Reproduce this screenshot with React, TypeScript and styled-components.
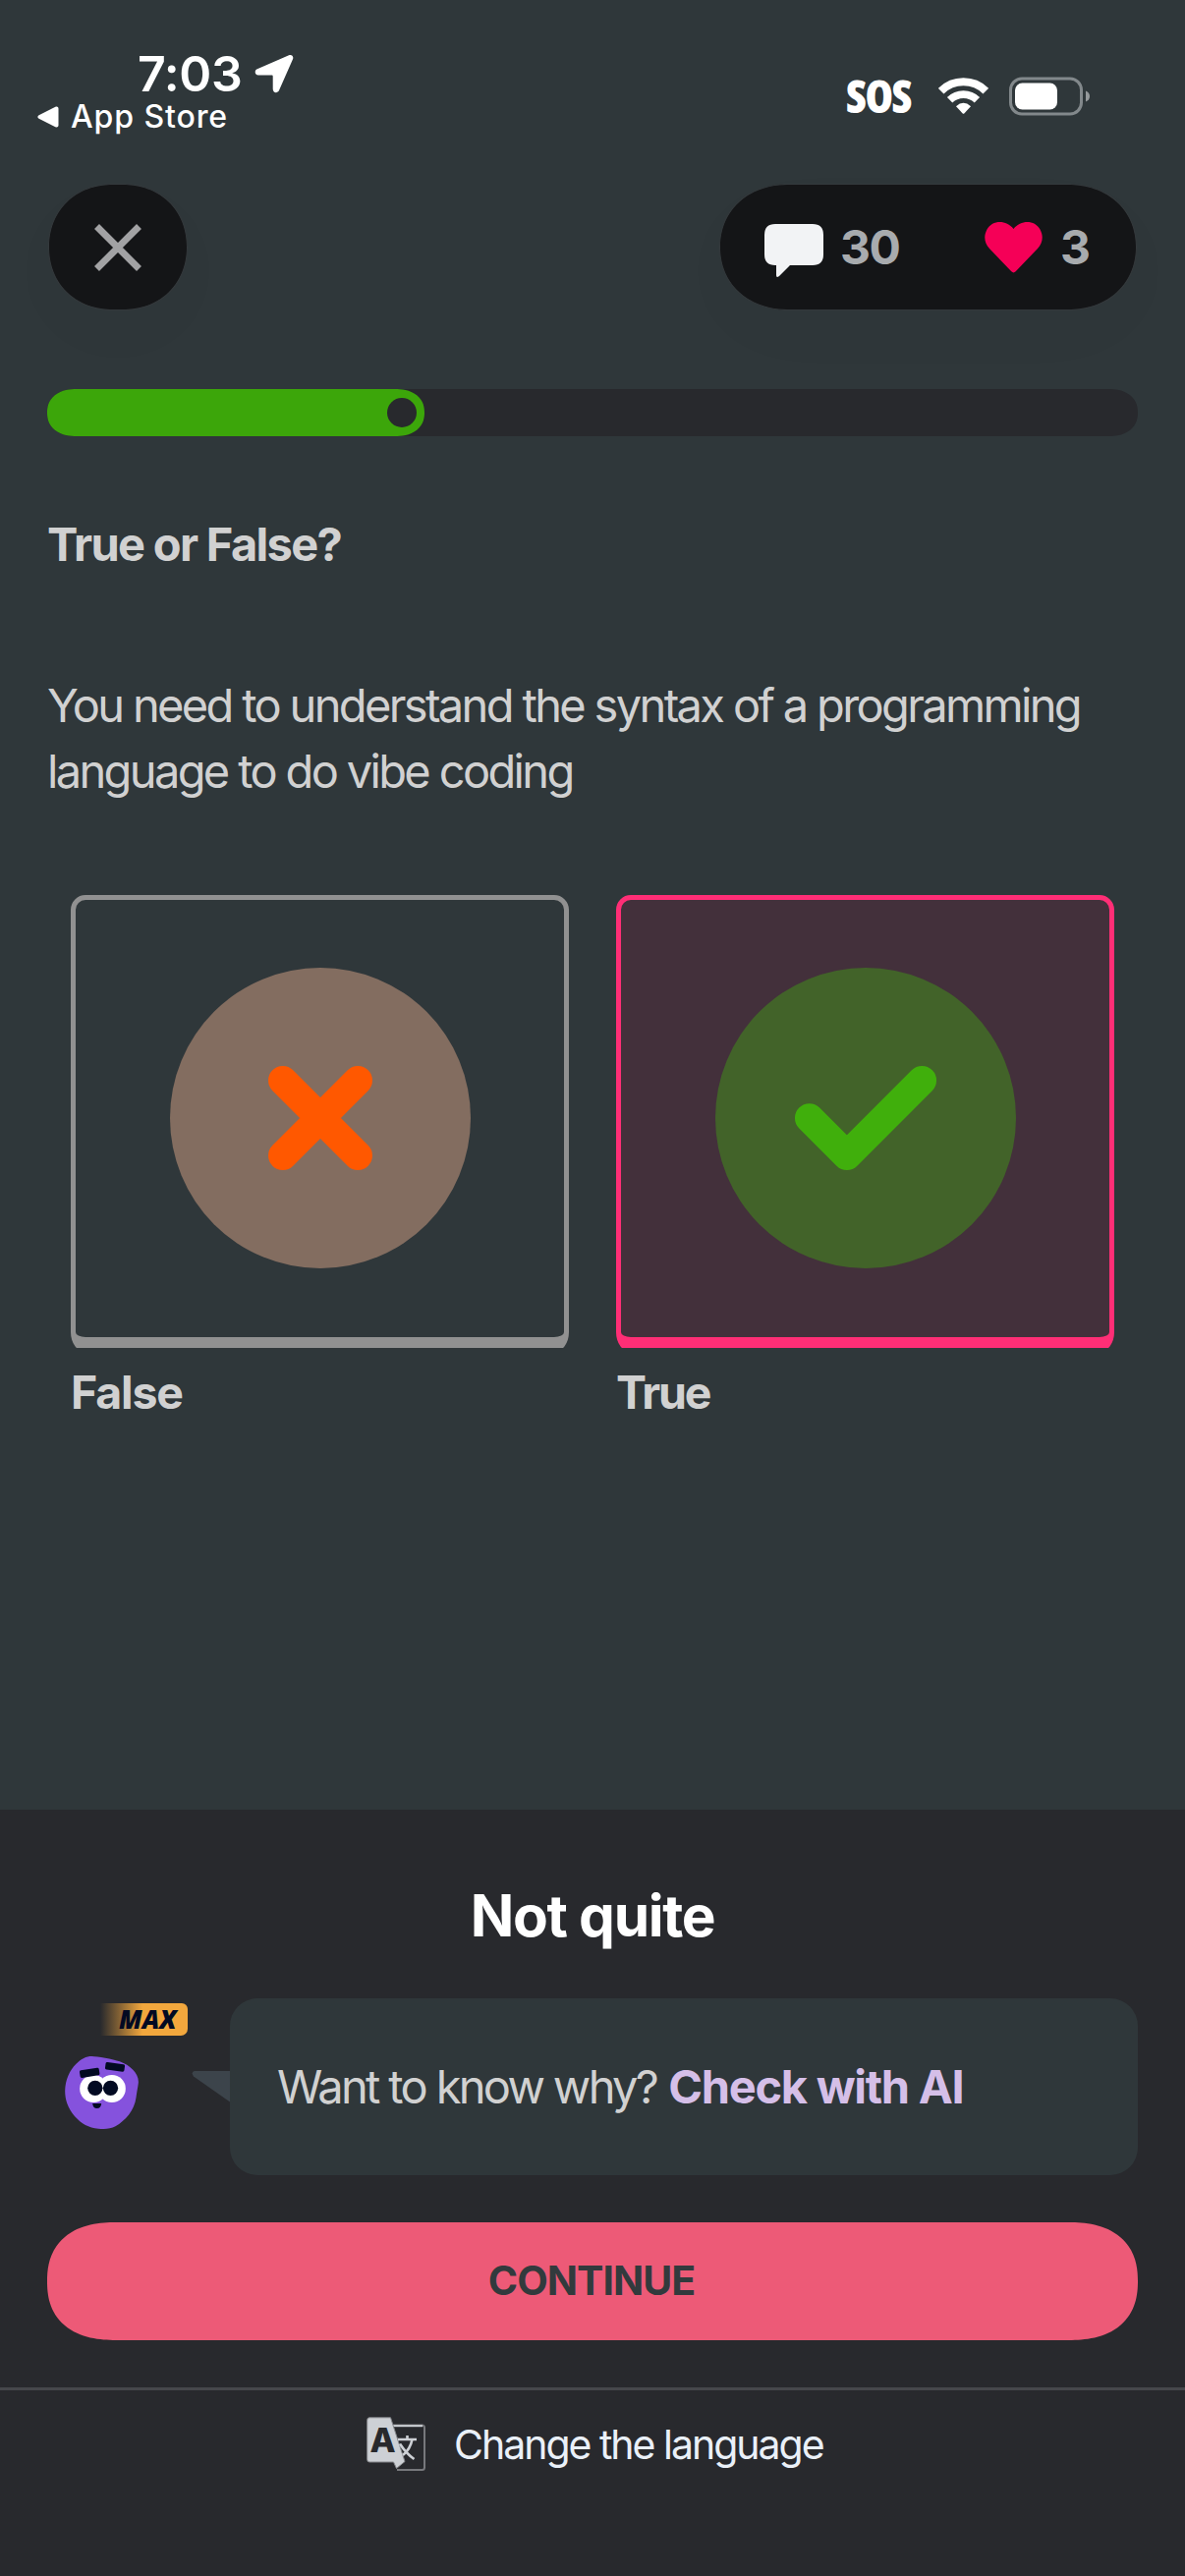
import React from "react";
import styled, { createGlobalStyle } from "styled-components";

const colors = {
  page: "#2f373a",
  panel: "#28292d",
  capsule: "#141517",
  text: "#d1d1d1",
  green: "#3ca60a",
  pink: "#ff2e76",
};

const GlobalStyle = createGlobalStyle`
  * { box-sizing: border-box; }
  body {
    margin: 0;
    background: ${colors.page};
    font-family: Inter, "Liberation Sans", sans-serif;
    -webkit-font-smoothing: antialiased;
  }
  svg { display: block; flex: none; }
`;

const Screen = styled.div`
  width: 1206px;
  height: 2622px;
  display: flex;
  flex-direction: column;
  overflow: hidden;
  background: ${colors.page};
`;

/* ---------- Status bar ---------- */

const StatusBar = styled.div`
  height: 187px;
  flex: none;
  display: flex;
  justify-content: space-between;
  padding: 50px 96px 0 38px;
  color: #fff;
`;

const StatusLeft = styled.div`
  display: flex;
  flex-direction: column;
  gap: 3px;
`;

const TimeRow = styled.div`
  display: flex;
  align-items: center;
  gap: 13px;
  height: 50px;
  padding-left: 102px;
`;

const Time = styled.span`
  font-size: 50px;
  line-height: 50px;
  font-weight: 600;
  letter-spacing: -0.35px;
`;

const BackRow = styled.div`
  display: flex;
  align-items: center;
  gap: 12px;
  height: 32px;
  font-size: 32px;
  line-height: 32px;
  font-weight: 500;
  letter-spacing: 0.9px;
`;

const StatusRight = styled.div`
  display: flex;
  align-items: center;
  height: 96px;
`;

const Sos = styled.span`
  font-family: "Open Sans", sans-serif;
  font-stretch: 75%;
  font-weight: 800;
  font-size: 46px;
  line-height: 46px;
  letter-spacing: -1.5px;
  width: 68px;
  margin-right: 26px;
  padding-bottom: 2px;
`;

const WifiIcon = styled.svg`
  margin-right: 21px;
`;

/* ---------- Header ---------- */

const Header = styled.header`
  display: flex;
  justify-content: space-between;
  flex: none;
  padding: 0 49px;
`;

const Capsule = styled.div<{ $width: number; $radius: string }>`
  width: ${(p) => p.$width}px;
  height: 129px;
  display: flex;
  align-items: center;
  background: ${colors.capsule};
  border: 1.5px solid #34393c;
  border-radius: ${(p) => p.$radius};
  corner-shape: superellipse(1.08);
  box-shadow: 0 24px 72px rgba(0, 0, 0, 0.02);
`;

const CloseButton = styled(Capsule)`
  justify-content: center;
`;

const Counters = styled(Capsule)`
  padding-left: 45px;
`;

const CommentIcon = styled.svg`
  margin-top: 7px;
`;

const Count = styled.span`
  font-size: 48px;
  line-height: 60px;
  font-weight: 700;
  letter-spacing: -1.5px;
  color: #a8abae;
`;

const Bits = styled(Count)`
  width: 147px;
  margin-left: 17px;
`;

const Hearts = styled(Count)`
  margin-left: 17px;
`;

/* ---------- Progress ---------- */

const Track = styled.div`
  flex: none;
  height: 48px;
  margin: 80px 48px 0;
  background: ${colors.panel};
  border-radius: 30px / 24px;
  corner-shape: superellipse(1.2);
`;

const Fill = styled.div`
  width: 384px;
  height: 48px;
  display: flex;
  align-items: center;
  justify-content: flex-end;
  padding-right: 8px;
  background: ${colors.green};
  border-radius: 30px / 24px;
  corner-shape: superellipse(1.2);
`;

const Knob = styled.div`
  width: 30px;
  height: 30px;
  border-radius: 50%;
  background: ${colors.panel};
`;

/* ---------- Question ---------- */

const Heading = styled.h1`
  margin: 80px 48px 0;
  font-size: 47px;
  line-height: 60px;
  font-weight: 700;
  letter-spacing: -1.69px;
  color: ${colors.text};
`;

const Statement = styled.p`
  width: 1110px;
  margin: 100px 48px 0;
  font-size: 47px;
  line-height: 67px;
  letter-spacing: -2.65px;
  color: ${colors.text};
`;

const Options = styled.div`
  display: grid;
  grid-template-columns: 1fr 1fr;
  gap: 48px;
  padding: 0 72px;
  margin-top: 93px;
`;

const Option = styled.div`
  display: flex;
  flex-direction: column;
`;

/* Crops the lower edge of the card so its bottom corners end flat. */
const OptionClip = styled.div`
  height: 461px;
  overflow: hidden;
`;

const OptionCard = styled.div<{ $selected?: boolean }>`
  height: 465px;
  display: flex;
  justify-content: center;
  padding-top: 69px;
  border: 5px solid ${(p) => (p.$selected ? colors.pink : "#919191")};
  border-bottom-width: 15px;
  border-radius: 15px / 15px 15px 20px 20px;
  background: ${(p) => (p.$selected ? "#43303b" : "transparent")};
`;

const OptionLabel = styled.div<{ $tracking: number }>`
  margin-top: 15px;
  font-size: 46.5px;
  line-height: 60px;
  font-weight: 700;
  letter-spacing: ${(p) => p.$tracking}px;
  color: ${colors.text};
`;

/* ---------- Result panel ---------- */

const Panel = styled.section`
  height: 780px;
  margin-top: auto;
  flex: none;
  padding-top: 72px;
  background: ${colors.panel};
`;

const Verdict = styled.h2`
  margin: 0;
  text-align: center;
  font-size: 58.5px;
  line-height: 72px;
  font-weight: 700;
  letter-spacing: -1.32px;
  color: #fff;
`;

const HintRow = styled.div`
  display: flex;
  margin: 48px 48px 0;
`;

const MascotColumn = styled.div`
  width: 186px;
  flex: none;
  padding-top: 5px;
`;

const MaxBadge = styled.div`
  width: 89px;
  height: 33px;
  margin: 0 0 21px 54px;
  padding-left: 19px;
  border-radius: 0 6px 7px 0;
  background: linear-gradient(90deg, rgba(242, 167, 61, 0) 0, #f2a73d 43px);
  font-family: "Open Sans", sans-serif;
  font-style: italic;
  font-weight: 800;
  font-size: 26px;
  line-height: 33px;
  color: #020a22;
`;

const Mascot = styled.svg`
  margin-left: 18px;
`;

const Hint = styled.div`
  position: relative;
  flex: 1;
  height: 180px;
  display: flex;
  align-items: center;
  padding-left: 48px;
  border-radius: 28px;
  background: ${colors.page};
  font-size: 47px;
  line-height: 60px;
  white-space: pre;
`;

const HintTail = styled.svg`
  position: absolute;
  left: -39px;
  top: 74px;
`;

const HintQuestion = styled.span`
  font-weight: 400;
  letter-spacing: -2.67px;
  color: ${colors.text};
`;

const HintLink = styled.span`
  margin-left: 12px;
  font-weight: 700;
  letter-spacing: -1.27px;
  color: #d5bfe8;
`;

const ContinueButton = styled.button`
  display: block;
  width: 1110px;
  height: 120px;
  margin: 48px 48px 0;
  padding: 0 2px 2px 0;
  border: 0;
  border-radius: 70px / 60px;
  corner-shape: superellipse(1.25);
  background: #ed5a77;
  font-family: inherit;
  font-size: 41px;
  font-weight: 650;
  letter-spacing: -0.98px;
  color: #323a3d;
`;

const LanguageRow = styled.div`
  display: flex;
  align-items: center;
  gap: 29px;
  margin-top: 48px;
  padding: 27px 0 0 373px;
  border-top: 3px solid #46474b;
  font-size: 41px;
  line-height: 54px;
  letter-spacing: -2.01px;
  color: #eaf0f8;
`;

const TranslateIcon = () => (
  <svg width="60" height="56" viewBox="0 0 60 56">
    <path d="M27 8.500H56.500Q59 8.500 59 11V51.500Q59 54 56.500 54H31" fill="none" stroke="#77787c" strokeWidth="2" />
    <path d="M27 9.200H57" stroke="#cdd0d5" strokeWidth="2" />
    <path d="M3 .8H24.500L39 45.500L30.500 52.500L27.500 46H3Q.7 46 .7 43.500V3.500Q.7.8 3 .8Z" fill="#cdd0d5" stroke="#85878b" strokeWidth="1" />
    <text x="16.500" y="35.500" textAnchor="middle" fontFamily="Inter, sans-serif" fontSize="34" fontWeight="800" letterSpacing="0" fill="#28292d">A</text>
    <g fill="none" stroke="#cdd0d5" strokeWidth="2.600">
      <path d="M32 23H51M41.500 19V23M34 27.500Q40 37 48.500 43M46.500 23Q44.500 33 37 39" />
    </g>
  </svg>
);

export default function App() {
  return (
    <>
      <GlobalStyle />
      <Screen>
        <StatusBar>
          <StatusLeft>
            <TimeRow>
              <Time>7:03</Time>
              <svg width="40" height="40" viewBox="0 0 40 40">
                <path d="M35 1.200 2.800 15.200C-.5 16.700.2 21.500 4 21.500H17.500C18.300 21.500 18.700 21.900 18.700 22.700V35.500C18.700 39.800 23.500 40.300 25 37L39 5.200C40.200 2.400 37.800 0 35 1.200Z" fill="#fff" />
              </svg>
            </TimeRow>
            <BackRow>
              <svg width="22" height="22" viewBox="0 0 22 22">
                <path d="M1.600 9.200 18.400.8C20 0 21.500.8 21.500 2.500V19.500C21.500 21.200 20 22 18.400 21.200L1.600 12.800C0 12 0 10 1.600 9.200Z" fill="#fff" />
              </svg>
              App Store
            </BackRow>
          </StatusLeft>
          <StatusRight>
            <Sos>SOS</Sos>
            <WifiIcon width="51" height="38" viewBox="0 0 51 38">
              <g fill="none" stroke="#fff" strokeWidth="8">
                <path d="M2.700 13.700A32.500 32.500 0 0 1 48.300 13.700" />
                <path d="M11.600 22.800A19.800 19.800 0 0 1 39.400 22.800" strokeWidth="7.600" />
              </g>
              <path d="M18 29.200Q25.500 22.500 33 29.200L26.500 36.300Q25.500 37.300 24.500 36.300Z" fill="#fff" />
            </WifiIcon>
            <svg width="83" height="40" viewBox="0 0 83 40">
              <rect x="1.500" y="2" width="72" height="36" rx="11.500" fill="none" stroke="#82888b" strokeWidth="3" />
              <rect x="6" y="6.500" width="43" height="27" rx="7.500" fill="#fff" />
              <path d="M78 14.500Q82 16 82 20T78 25.500Z" fill="#95999b" />
            </svg>
          </StatusRight>
        </StatusBar>

        <Header>
          <CloseButton $width={142} $radius="66px / 64.5px">
            <svg width="48" height="48" viewBox="0 0 48 48">
              <path d="M2.500 2.500 45.500 45.500M45.500 2.500 2.500 45.500" stroke="#a2a2a4" strokeWidth="7" />
            </svg>
          </CloseButton>
          <Counters $width={425} $radius="70px / 64.5px">
            <CommentIcon width="60" height="56" viewBox="0 0 60 56">
              <path d="M11 1H49Q60 1 60 12V32Q60 43 49 43H26L15 54Q12 56.500 12 53V43H11Q0 43 0 32V12Q0 1 11 1Z" fill="#f2f3f5" />
            </CommentIcon>
            <Bits>30</Bits>
            <svg width="60" height="52" viewBox="0 0 60 52">
              <path d="M29.500 7C22-2.500 8-2.300 2.500 7.500C-1.500 15 .2 22 5 27L27.300 50.300Q29.500 52.500 31.700 50.300L54 27C58.800 22 60.500 15 56.500 7.500C51-2.300 37-2.500 29.500 7Z" fill="#f50057" />
            </svg>
            <Hearts>3</Hearts>
          </Counters>
        </Header>

        <Track>
          <Fill>
            <Knob />
          </Fill>
        </Track>

        <Heading>True or False?</Heading>
        <Statement>
          You need to understand the syntax of a programming
          <br />
          language to do vibe coding
        </Statement>

        <Options>
          <Option>
            <OptionClip>
              <OptionCard>
                <svg width="306" height="306" viewBox="-153 -153 306 306">
                  <circle r="153" fill="#836d60" />
                  <path d="M-38.200-38.200 38.200 38.200M38.200-38.200-38.200 38.200" stroke="#ff5800" strokeWidth="29.500" strokeLinecap="round" />
                </svg>
              </OptionCard>
            </OptionClip>
            <OptionLabel $tracking={-1.2}>False</OptionLabel>
          </Option>
          <Option>
            <OptionClip>
              <OptionCard $selected>
                <svg width="306" height="306" viewBox="-153 -153 306 306">
                  <circle r="153" fill="#426329" />
                  <path d="M-57.300 0-19.100 38.200 57.300-38.200" fill="none" stroke="#40af0c" strokeWidth="29.500" strokeLinecap="round" strokeLinejoin="round" />
                </svg>
              </OptionCard>
            </OptionClip>
            <OptionLabel $tracking={-2.2}>True</OptionLabel>
          </Option>
        </Options>

        <Panel>
          <Verdict>Not quite</Verdict>
          <HintRow>
            <MascotColumn>
              <MaxBadge>MAX</MaxBadge>
              <Mascot width="75" height="74" viewBox="78 219 224 222">
                <path d="M160 219C175 219 225 228 245 235C278 247 304 272 302 300C300 316 297 330 295 345C290 385 262 415 232 433C217 442 195 441 180 440C150 438 128 425 108 403C86 378 78 350 78 325C79 290 92 262 112 242C128 227 142 219 160 219Z" fill="#8552dd" />
                <circle cx="165" cy="318" r="42" fill="#fff" />
                <circle cx="221" cy="318" r="42" fill="#fff" />
                <circle cx="170" cy="316" r="23" fill="#020a22" />
                <circle cx="217" cy="316" r="23" fill="#020a22" />
                <rect x="123" y="258" width="60" height="23" rx="5" transform="rotate(-9 153 269)" fill="#020a22" />
                <rect x="201" y="240" width="59" height="23" rx="5" transform="rotate(8 230 252)" fill="#020a22" />
                <path d="M162 363H189Q188 378 175.500 378T162 363Z" fill="#020a22" />
              </Mascot>
            </MascotColumn>
            <Hint>
              <HintTail width="39" height="32" viewBox="0 0 39 32">
                <path d="M3 0H39V31.500L2 5.500Q-1 1 3 0Z" fill="#3c444b" />
              </HintTail>
              <HintQuestion>Want to know why?</HintQuestion>
              <HintLink>Check with AI</HintLink>
            </Hint>
          </HintRow>
          <ContinueButton>CONTINUE</ContinueButton>
          <LanguageRow>
            <TranslateIcon />
            Change the language
          </LanguageRow>
        </Panel>
      </Screen>
    </>
  );
}
